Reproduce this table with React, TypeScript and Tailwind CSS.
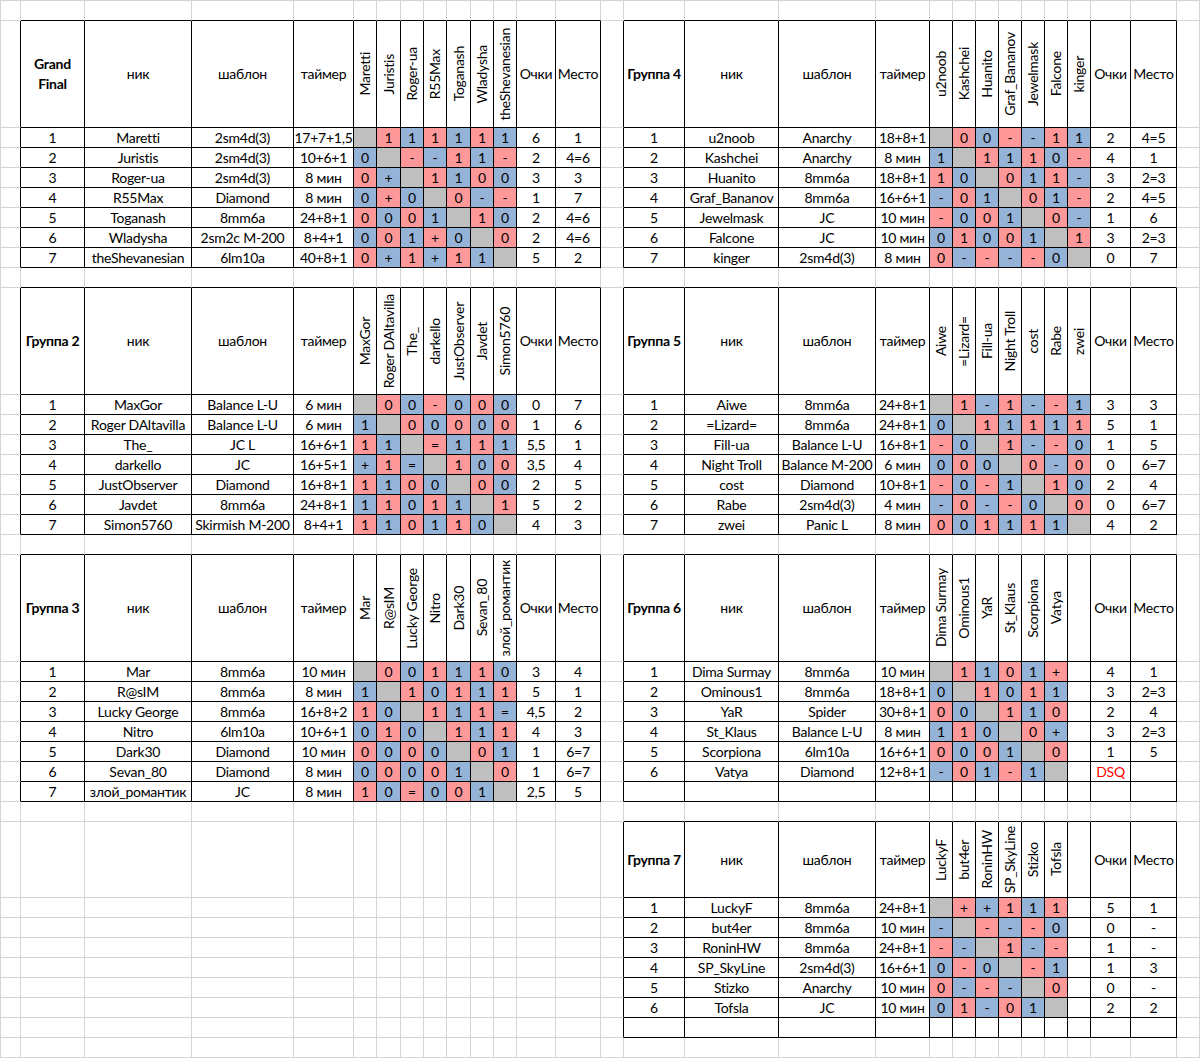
import React from 'react';
import clsx from 'clsx';

type Row = [string, string, string, string, string, string];

interface Table {
  top: number;
  left: number;
  title: string[];
  players: string[];
  rows: Row[];
}

interface Cell {
  text?: React.ReactNode;
  bg?: string;
  bold?: boolean;
  vert?: boolean;
  red?: boolean;
}

const ROWS = 37;
const COLS = 29;

const tables: Table[] = [
  {
    top: 1,
    left: 1,
    title: ['Grand', 'Final'],
    players: ['Maretti', 'Juristis', 'Roger-ua', 'R55Max', 'Toganash', 'Wladysha', 'theShevanesian'],
    rows: [
      ['Maretti', '2sm4d(3)', '17+7+1,5', '_111111', '6', '1'],
      ['Juristis', '2sm4d(3)', '10+6+1', '0_--11-', '2', '4=6'],
      ['Roger-ua', '2sm4d(3)', '8 мин', '0+_1100', '3', '3'],
      ['R55Max', 'Diamond', '8 мин', '0+0_0--', '1', '7'],
      ['Toganash', '8mm6a', '24+8+1', '0001_10', '2', '4=6'],
      ['Wladysha', '2sm2c M-200', '8+4+1', '001+0_0', '2', '4=6'],
      ['theShevanesian', '6lm10a', '40+8+1', '0+1+11_', '5', '2'],
    ],
  },
  {
    top: 1,
    left: 15,
    title: ['Группа 4'],
    players: ['u2noob', 'Kashchei', 'Huanito', 'Graf_Bananov', 'Jewelmask', 'Falcone', 'kinger'],
    rows: [
      ['u2noob', 'Anarchy', '18+8+1', '_00--11', '2', '4=5'],
      ['Kashchei', 'Anarchy', '8 мин', '1_1110-', '4', '1'],
      ['Huanito', '8mm6a', '18+8+1', '10_011-', '3', '2=3'],
      ['Graf_Bananov', '8mm6a', '16+6+1', '-01_01-', '2', '4=5'],
      ['Jewelmask', 'JC', '10 мин', '-001_0-', '1', '6'],
      ['Falcone', 'JC', '10 мин', '01001_1', '3', '2=3'],
      ['kinger', '2sm4d(3)', '8 мин', '0----0_', '0', '7'],
    ],
  },
  {
    top: 10,
    left: 1,
    title: ['Группа 2'],
    players: ['MaxGor', 'Roger DAltavilla', 'The_', 'darkello', 'JustObserver', 'Javdet', 'Simon5760'],
    rows: [
      ['MaxGor', 'Balance L-U', '6 мин', '_00-000', '0', '7'],
      ['Roger DAltavilla', 'Balance L-U', '6 мин', '1_00000', '1', '6'],
      ['The_', 'JC L', '16+6+1', '11_=111', '5,5', '1'],
      ['darkello', 'JC', '16+5+1', '+1=_100', '3,5', '4'],
      ['JustObserver', 'Diamond', '16+8+1', '1100_00', '2', '5'],
      ['Javdet', '8mm6a', '24+8+1', '11011_1', '5', '2'],
      ['Simon5760', 'Skirmish M-200', '8+4+1', '110110_', '4', '3'],
    ],
  },
  {
    top: 10,
    left: 15,
    title: ['Группа 5'],
    players: ['Aiwe', '=Lizard=', 'Fill-ua', 'Night Troll', 'cost', 'Rabe', 'zwei'],
    rows: [
      ['Aiwe', '8mm6a', '24+8+1', '_1-1--1', '3', '3'],
      ['=Lizard=', '8mm6a', '24+8+1', '0_11111', '5', '1'],
      ['Fill-ua', 'Balance L-U', '16+8+1', '-0_1--0', '1', '5'],
      ['Night Troll', 'Balance M-200', '6 мин', '000_0-0', '0', '6=7'],
      ['cost', 'Diamond', '10+8+1', '-0-1_10', '2', '4'],
      ['Rabe', '2sm4d(3)', '4 мин', '-0--0_0', '0', '6=7'],
      ['zwei', 'Panic L', '8 мин', '001111_', '4', '2'],
    ],
  },
  {
    top: 19,
    left: 1,
    title: ['Группа 3'],
    players: ['Mar', 'R@sIM', 'Lucky George', 'Nitro', 'Dark30', 'Sevan_80', 'злой_романтик'],
    rows: [
      ['Mar', '8mm6a', '10 мин', '_001110', '3', '4'],
      ['R@sIM', '8mm6a', '8 мин', '1_10111', '5', '1'],
      ['Lucky George', '8mm6a', '16+8+2', '10_111=', '4,5', '2'],
      ['Nitro', '6lm10a', '10+6+1', '010_111', '4', '3'],
      ['Dark30', 'Diamond', '10 мин', '0000_01', '1', '6=7'],
      ['Sevan_80', 'Diamond', '8 мин', '00001_0', '1', '6=7'],
      ['злой_романтик', 'JC', '8 мин', '10=001_', '2,5', '5'],
    ],
  },
  {
    top: 19,
    left: 15,
    title: ['Группа 6'],
    players: ['Dima Surmay', 'Ominous1', 'YaR', 'St_Klaus', 'Scorpiona', 'Vatya', ''],
    rows: [
      ['Dima Surmay', '8mm6a', '10 мин', '_1101+ ', '4', '1'],
      ['Ominous1', '8mm6a', '18+8+1', '0_1011 ', '3', '2=3'],
      ['YaR', 'Spider', '30+8+1', '00_110 ', '2', '4'],
      ['St_Klaus', 'Balance L-U', '8 мин', '110_0+ ', '3', '2=3'],
      ['Scorpiona', '6lm10a', '16+6+1', '0001_0 ', '1', '5'],
      ['Vatya', 'Diamond', '12+8+1', '-01-1_ ', 'DSQ', ''],
    ],
  },
  {
    top: 28,
    left: 15,
    title: ['Группа 7'],
    players: ['LuckyF', 'but4er', 'RoninHW', 'SP_SkyLine', 'Stizko', 'Tofsla', ''],
    rows: [
      ['LuckyF', '8mm6a', '24+8+1', '_++111 ', '5', '1'],
      ['but4er', '8mm6a', '10 мин', '-_---0 ', '0', '-'],
      ['RoninHW', '8mm6a', '24+8+1', '--_1-- ', '1', '-'],
      ['SP_SkyLine', '2sm4d(3)', '16+6+1', '0-0_-1 ', '1', '3'],
      ['Stizko', 'Anarchy', '10 мин', '0---_0 ', '0', '-'],
      ['Tofsla', 'JC', '10 мин', '01-01_ ', '2', '2'],
    ],
  },
];

// who moved first: colour flips between the two halves of the cross table
const resultBg = (i: number, j: number, ch: string) => {
  if (ch === ' ') return undefined;
  if (ch === '_') return 'bg-[#bfbfbf]';
  const odd = (i + j) % 2 === 1;
  const pink = j > i ? odd : !odd;
  return pink ? 'bg-[#ff9999]' : 'bg-[#95b3d7]';
};

const buildSheet = () => {
  const cells = new Map<string, Cell>();
  const inTable = new Set<string>();
  const put = (r: number, c: number, cell: Cell) => cells.set(`${r}:${c}`, cell);

  tables.forEach(t => {
    for (let r = t.top; r < t.top + 8; r++) {
      for (let c = t.left; c < t.left + 13; c++) inTable.add(`${r}:${c}`);
    }
    put(t.top, t.left, {
      bold: true,
      text: t.title.length > 1 ? (
        <span className="text-center leading-[20px]">
          {t.title[0]}
          <br />
          {t.title[1]}
        </span>
      ) : t.title[0],
    });
    put(t.top, t.left + 1, { text: 'ник' });
    put(t.top, t.left + 2, { text: 'шаблон' });
    put(t.top, t.left + 3, { text: 'таймер' });
    t.players.forEach((p, k) => put(t.top, t.left + 4 + k, { text: p, vert: true }));
    put(t.top, t.left + 11, { text: 'Очки' });
    put(t.top, t.left + 12, { text: 'Место' });

    t.rows.forEach((row, k) => {
      const r = t.top + 1 + k;
      const [nick, tpl, timer, res, pts, place] = row;
      put(r, t.left, { text: String(k + 1) });
      put(r, t.left + 1, { text: nick });
      put(r, t.left + 2, { text: tpl });
      put(r, t.left + 3, { text: timer });
      res.split('').forEach((ch, j) => {
        put(r, t.left + 4 + j, {
          text: ch === '_' || ch === ' ' ? '' : ch,
          bg: resultBg(k + 1, j + 1, ch),
        });
      });
      put(r, t.left + 11, { text: pts, red: pts === 'DSQ' });
      put(r, t.left + 12, { text: place });
    });
  });

  return { cells, inTable };
};

export default function App() {
  const { cells, inTable } = buildSheet();
  const has = (r: number, c: number) => inTable.has(`${r}:${c}`);

  const out: React.ReactNode[] = [];
  for (let r = 0; r < ROWS; r++) {
    for (let c = 0; c < COLS; c++) {
      const cell = cells.get(`${r}:${c}`);
      const rightDark = has(r, c) || has(r, c + 1);
      const bottomDark = has(r, c) || has(r + 1, c);
      out.push(
        <div
          key={`${r}:${c}`}
          className={clsx(
            'flex items-center justify-center overflow-hidden whitespace-nowrap border-r border-b',
            rightDark ? 'border-r-black' : 'border-r-[#d4d4d4]',
            bottomDark ? 'border-b-black' : 'border-b-[#d4d4d4]',
            cell?.bg,
            cell?.bold && 'font-bold',
            cell?.red ? 'text-[#ff0000]' : 'text-black'
          )}
        >
          {cell?.vert ? (
            <span className="rotate-180 [writing-mode:vertical-rl]">{cell.text}</span>
          ) : (
            cell?.text
          )}
        </div>
      );
    }
  }

  return (
    <div className="h-[1058px] w-[1200px] overflow-hidden bg-white">
      <div className="grid grid-cols-[20px_64px_107px_102px_60px_23px_24px_23px_23px_24px_23px_23px_39px_45px_23px_61px_94px_97px_54px_23px_23px_23px_23px_23px_23px_23px_40px_46px_23px] grid-rows-[20px_107px_repeat(7,20px)_20px_107px_repeat(7,20px)_20px_107px_repeat(7,20px)_20px_76px_repeat(7,20px)_20px] border-t border-l border-[#d4d4d4] font-[Lato,sans-serif] text-[14px] leading-[20px] tracking-[-0.25px]">
        {out}
      </div>
    </div>
  );
}
